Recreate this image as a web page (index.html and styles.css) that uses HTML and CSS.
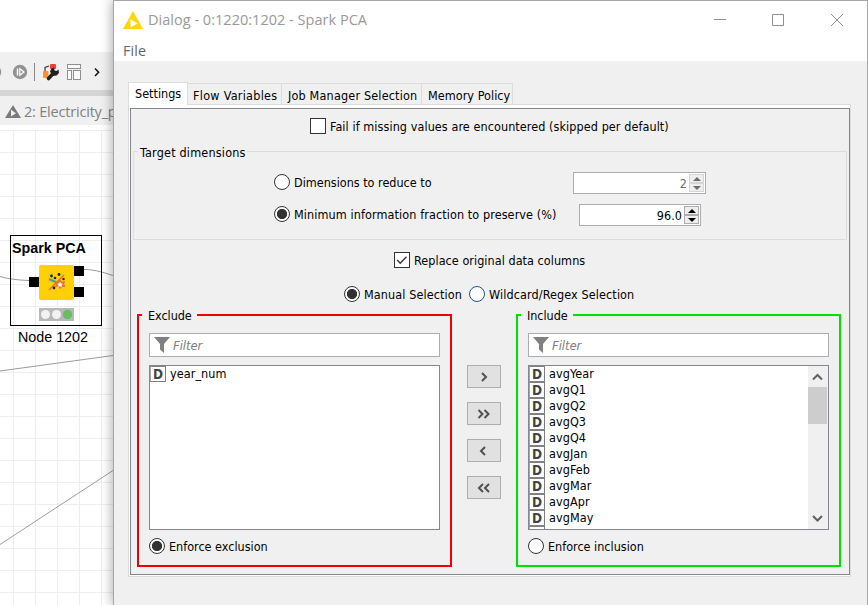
FILE: index.html
```
<!DOCTYPE html>
<html lang="en">
<head>
<meta charset="utf-8">
<title>Dialog - 0:1220:1202 - Spark PCA</title>
<link rel="stylesheet" href="styles.css">
</head>
<body>
<div class="desktop">
  <aside class="workbench">
    <div class="toolbar">
      <svg width="113" height="38" viewBox="0 0 113 38">
        <circle cx="-6" cy="20" r="7.200" fill="#929292"/>
        <circle cx="20" cy="20" r="7.200" fill="#929292"/>
        <path d="M17.500 16.500v7" stroke="#fff" stroke-width="1.500"/>
        <path d="M19.800 16.800l4.200 3.200-4.200 3.200z" fill="none" stroke="#fff" stroke-width="1.200"/>
        <path d="M34.500 11v18" stroke="#8a8a8a"/>
        <path d="M45 19v-3.500l4-1.500" fill="none" stroke="#333" stroke-width="1.200"/>
        <rect x="50" y="12" width="6" height="5" rx="1" fill="#f63b3b"/>
        <rect x="43" y="19" width="5.500" height="7" rx="1" fill="#f7922c"/>
        <path d="M48.500 26.500l5.500-6" stroke="#222" stroke-width="3.600" stroke-linecap="round"/>
        <path d="M50 19.500l1.500-3 2.500-1 .5 3 2 .5 2-1.500 .500 3.500-2.500 2.500-4 .500z" fill="#222"/>
        <g fill="#fafafa" stroke="#8f8f8f"><rect x="67.500" y="12.500" width="13" height="4"/><rect x="67.500" y="18.500" width="4" height="9"/><rect x="73.500" y="18.500" width="7" height="9"/></g>
        <path d="M95 16.500l3.600 3.700-3.600 3.700" fill="none" stroke="#111" stroke-width="1.500"/>
      </svg>
    </div>
    <div class="editor-tab">
      <svg width="16" height="14" viewBox="0 0 16 14"><path d="M8 0l8 13H0z" fill="#7a7a7a"/><path d="M6 4.700l5 3.500-5 3.300z" fill="#efefef"/></svg>
      <span>2: Electricity_p</span>
    </div>
    <div class="canvas">
      <svg class="wires" width="113" height="480" viewBox="0 125 113 480" fill="none" stroke="#9c9c9c">
        <path d="M0 276.500Q12 280 29 280.500"/>
        <path d="M84 269.500Q94 269 113 275.500"/>
        <path d="M0 371L113 355.500M0 544.500L113 470.500"/>
      </svg>
      <div class="node">
        <div class="node-name">Spark PCA</div>
        <svg width="92" height="60" viewBox="10 262 92 60">
          <path d="M29 277h10v10H29zM74 266h10v10H74zM74 287h10v10H74z"/>
          <rect x="39" y="265" width="35" height="35" rx="2" fill="#ffcf08"/>
          <path d="M49 279l9 4" stroke="#5297a8" stroke-width="2"/>
          <path d="M49 290l15-15" stroke="#e8692b" stroke-width="1.300"/>
          <path d="M60 279l1.800 2.700 3.200-.700-.700 3 1 3-3.200 0-2 2-2-2.500-3.100.500 1-3-1-2.500 3.200 0z" fill="#e87532"/>
          <path d="M60 282l.9 1.600 1.900.2-1.200 1.400.2 1.800-1.800-.8-1.700.8.200-1.800-1.200-1.400 1.900-.200z" fill="#fff"/>
          <g fill="#222"><circle cx="51.500" cy="276" r="1.400"/><circle cx="59" cy="274.500" r="1.400"/><circle cx="55" cy="278" r="1.300"/><circle cx="63.500" cy="279" r="1.200"/><circle cx="54" cy="288" r="1.400"/></g>
          <rect x="39" y="308" width="35" height="13" fill="#b8b8b8"/>
          <circle cx="45.500" cy="314.500" r="4.500" fill="#f2f2f2"/><circle cx="56.500" cy="314.500" r="4.500" fill="#f2f2f2"/><circle cx="67.500" cy="314.500" r="4.700" fill="#67bd5f"/>
        </svg>
      </div>
      <div class="node-label">Node 1202</div>
    </div>
  </aside>

  <main class="dialog">
    <header class="titlebar">
      <svg width="20" height="18" viewBox="0 0 20 18"><path d="M10 0l10 18H0z" fill="#ffd60a"/><path d="M7.500 8.300l7 4.200-7 4z" fill="#fff"/></svg>
      <h1>Dialog - 0:1220:1202 - Spark PCA</h1>
      <svg class="controls" width="130" height="14" viewBox="0 0 130 14" fill="none" stroke="#8f8f8f"><path d="M0 6.500h12M58.500 1.500h11v11h-11zM117 1l12 12M129 1l-12 12"/></svg>
    </header>
    <nav class="menubar">File</nav>
    <div class="content">
      <div class="tabs">
        <div class="tab active">Settings</div>
        <div class="tab flow">Flow Variables</div>
        <div class="tab job">Job Manager Selection</div>
        <div class="tab memory">Memory Policy</div>
      </div>
      <div class="pane-frame">
        <section class="pane">
          <div class="row fail"><i class="check"></i><span>Fail if missing values are encountered (skipped per default)</span></div>
          <fieldset class="target">
            <legend>Target dimensions</legend>
            <div class="dimension">
              <i class="radio"></i><span class="tight">Dimensions to reduce to</span>
              <div class="spinner disabled"><span>2</span><div class="steps"><b class="up"></b><b class="down"></b></div></div>
            </div>
            <div class="dimension fraction">
              <i class="radio on"></i><span>Minimum information fraction to preserve (%)</span>
              <div class="spinner"><span>96.0</span><div class="steps"><b class="up"></b><b class="down"></b></div></div>
            </div>
          </fieldset>
          <div class="row replace"><i class="check"><svg width="14" height="14" viewBox="0 0 14 14"><path d="M2.200 7l3 3.200 6.300-6.500" fill="none" stroke="#333" stroke-width="1.300"/></svg></i><span>Replace original data columns</span></div>
          <div class="row mode"><i class="radio on"></i><span class="manual">Manual Selection</span><i class="radio hover"></i><span>Wildcard/Regex Selection</span></div>

          <div class="columns">
            <fieldset class="group exclude">
              <legend>Exclude</legend>
              <div class="filter"><svg width="16" height="16" viewBox="0 0 16 16"><path d="M0 0h16L10 7v9l-4-3.500V7z" fill="#808080"/></svg><em>Filter</em></div>
              <ul class="list"><li><b>D</b>year_num</li></ul>
              <div class="row enforce"><i class="radio on"></i><span>Enforce exclusion</span></div>
            </fieldset>
            <div class="movers">
              <button><svg width="16" height="10" viewBox="0 0 16 10"><path d="M6 1l4 4-4 4"/></svg></button>
              <button><svg width="16" height="10" viewBox="0 0 16 10"><path d="M2.500 1l4 4-4 4M8.500 1l4 4-4 4"/></svg></button>
              <button><svg width="16" height="10" viewBox="0 0 16 10"><path d="M9 1L5 5l4 4"/></svg></button>
              <button><svg width="16" height="10" viewBox="0 0 16 10"><path d="M7 1L3 5l4 4M13 1L9 5l4 4"/></svg></button>
            </div>
            <fieldset class="group include">
              <legend>Include</legend>
              <div class="filter"><svg width="16" height="16" viewBox="0 0 16 16"><path d="M0 0h16L10 7v9l-4-3.500V7z" fill="#808080"/></svg><em>Filter</em></div>
              <div class="scroll">
                <ul class="list">
                  <li><b>D</b>avgYear</li><li><b>D</b>avgQ1</li><li><b>D</b>avgQ2</li><li><b>D</b>avgQ3</li><li><b>D</b>avgQ4</li><li><b>D</b>avgJan</li><li><b>D</b>avgFeb</li><li><b>D</b>avgMar</li><li><b>D</b>avgApr</li><li><b>D</b>avgMay</li><li><b></b></li>
                </ul>
                <div class="scrollbar">
                  <svg width="19" height="21" viewBox="0 0 19 21"><path d="M5 13.500l4.500-4.500 4.500 4.500"/></svg>
                  <div class="thumb"></div>
                  <svg width="19" height="21" viewBox="0 0 19 21"><path d="M5 8l4.500 4.500L14 8"/></svg>
                </div>
              </div>
              <div class="row enforce"><i class="radio"></i><span>Enforce inclusion</span></div>
            </fieldset>
          </div>
        </section>
      </div>
    </div>
  </main>
</div>
</body>
</html>
```
FILE: styles.css
```
* { box-sizing: border-box; }
body { margin: 0; font: 12.5px/16px "DejaVu Sans Condensed", "DejaVu Sans", sans-serif; letter-spacing: .05px; color: #000; background: #fff; white-space: nowrap; }
svg { display: block; flex: none; }
fieldset { margin: 0; padding: 0; min-width: 0; border: 0; }
.desktop { display: flex; width: 868px; height: 605px; overflow: hidden; }

.workbench { flex: none; width: 113px; height: 605px; overflow: hidden; padding-top: 52px; display: flex; flex-direction: column; }
.toolbar { height: 38px; background: #f0f0f0; flex: none; }
.editor-tab { height: 35px; flex: none; border-top: 6px solid #d5d5d5; background: #f0f0f0; display: flex; align-items: center; gap: 3px; padding: 2px 0 0 5px; font: 14.5px/20px "Open Sans", sans-serif; letter-spacing: -.2px; color: #808080; }
.canvas { flex: 1; position: relative; border-top: 5px solid #fff; background: linear-gradient(90deg, transparent 21px, #eee 21px) -8px 0 / 22px 22px, linear-gradient(#eee 1px, transparent 1px) 0 0 / 22px 22px; }
.wires { position: absolute; left: 0; top: -5px; }
.node { position: absolute; left: 10px; top: 105px; width: 92px; height: 91px; border: 1px solid #000; }
.node-name { font: bold 14.3px/24px "Liberation Sans", sans-serif; letter-spacing: 0; padding-left: 1px; }
.node svg { margin: 2px 0 0 -1px; }
.node-label { position: absolute; left: 18px; top: 197px; font: 14.3px/20px "Liberation Sans", sans-serif; letter-spacing: 0; }

.dialog { flex: none; width: 755px; height: 605px; border: 1px solid #a6a6a6; border-bottom: 0; background: #f0f0f0; box-shadow: -2px 0 10px rgba(0,0,0,.28); position: relative; }
.titlebar { height: 37px; background: #fff; display: flex; align-items: center; padding-left: 9px; }
.titlebar h1 { margin: 0 0 0 5px; font: 14.5px/20px "Open Sans", sans-serif; letter-spacing: .02px; color: #999; }
.controls { margin: 0 23px 0 auto; }
.menubar { height: 23px; background: #fff; padding: 3px 0 0 9px; font: 14.3px/20px "Open Sans", sans-serif; letter-spacing: .1px; color: #666; }
.content { padding: 21px 0 0 14px; }
.tabs { display: flex; align-items: flex-end; height: 22px; }
.tab { height: 21px; border: 1px solid #dcdcdc; border-left: 0; border-bottom: 0; padding: 4px 0 0 5px; }
.tab.active { width: 60px; height: 23px; margin-bottom: -1px; border-left: 1px solid #dcdcdc; background: #fff; padding: 3px 0 0 6px; letter-spacing: 0; position: relative; }
.tab.flow { width: 94px; letter-spacing: .28px; }
.tab.job { width: 140px; padding-left: 6px; letter-spacing: .18px; }
.tab.memory { width: 91px; padding-left: 6px; }
.pane-frame { width: 723px; height: 473px; border: 1px solid #dcdcdc; padding: 3px 0 1px 1px; background: #fff; }
.pane { width: 720px; height: 467px; border: 1px solid #828790; background: #f0f0f0; }

.row { display: flex; align-items: center; gap: 4px; height: 16px; }
.row span { padding-top: 1px; }
.check, .radio { flex: none; width: 16px; height: 16px; background: #fff; border: 1px solid #333; }
.radio { border-radius: 50%; }
.radio.on { background: radial-gradient(circle, #333 4.7px, #fff 5.5px); }
.radio.hover { border-color: #24527f; }
.fail { height: 34px; padding-left: 179px; letter-spacing: .08px; }
.target { width: 714px; height: 97px; margin-left: 2px; border: 1px solid #dcdcdc; }
.target legend { height: 17px; padding: 2px 1px 0 2px; margin-left: 4px; letter-spacing: .2px; }
.dimension { display: flex; align-items: flex-start; height: 22px; margin: 12px 0 0 140px; }
.dimension > .radio { margin-top: 2px; }
.dimension > span { width: 279px; margin: 3px 0 0 4px; letter-spacing: .1px; }
.dimension > .tight { letter-spacing: 0; }
.dimension.fraction { margin-top: 10px; }
.fraction > span { width: 285px; }
.spinner { width: 133px; height: 22px; border: 1px solid #abadb3; background: #fff; display: flex; align-items: center; justify-content: flex-end; padding-right: 1px; gap: 2px; }
.fraction .spinner { width: 122px; }
.spinner > span { padding-top: 1px; }
.disabled { color: #6d6d6d; }
.steps { width: 15px; height: 18px; display: grid; grid-template-rows: 9px 9px; }
.steps b { border: 1px solid #acacac; background: #eee; display: grid; place-items: center; }
.disabled .steps b { border-color: #d5d5d5; }
.steps b::after { content: ""; border: 4px solid transparent; border-top-width: 0; border-bottom: 4px solid currentColor; }
.steps .down::after { transform: rotate(180deg); }
.replace { margin: 12px 0 0 263px; letter-spacing: .05px; }
.mode { margin: 18px 0 0 213px; letter-spacing: .11px; }
.manual { width: 101px; }

.columns { display: flex; margin: 5px 0 0 6px; }
.group { height: 260px; border: 2px solid #f00000; padding: 10px 10px 0; }
.exclude { width: 315px; }
.include { width: 325px; border-color: #00e000; }
.group legend { height: 16px; padding: 1px 5px 0 6px; margin-left: -7px; letter-spacing: -.05px; }
.filter { height: 24px; border: 1px solid #abadb3; background: #fff; display: flex; align-items: center; gap: 3px; padding-left: 4px; color: #808080; letter-spacing: 0; }
.filter em { font-size: 13px; letter-spacing: -.1px; padding-top: 1px; }
.list { list-style: none; margin: 0; padding: 0; height: 165px; flex: 1; background: #fff; overflow: hidden; letter-spacing: .08px; }
.group > .list, .scroll { height: 165px; border: 1px solid #828790; margin-top: 8px; }
.list li { display: flex; height: 16px; gap: 4px; }
.list b { flex: none; width: 16px; height: 16px; border: 1px solid #808080; border-left-color: #a8a8a8; color: #444; font: bold 13.5px/14px "DejaVu Sans Condensed", sans-serif; letter-spacing: 0; text-align: center; }
.scroll { display: flex; }
.scroll .list { height: 163px; }
.scrollbar { width: 20px; background: #f0f0f0; fill: none; stroke: #606060; stroke-width: 2; display: flex; flex-direction: column; }
.thumb { width: 19px; height: 37px; background: #cdcdcd; margin-bottom: auto; }
.enforce { margin-top: 8px; letter-spacing: 0; }
.movers { width: 64px; padding: 58px 0 0 15px; display: flex; flex-direction: column; gap: 14px; }
.movers button { width: 34px; height: 23px; padding: 0; border: 1px solid #adadad; background: #e1e1e1; display: grid; place-items: center; fill: none; stroke: #505050; stroke-width: 2; }
```
